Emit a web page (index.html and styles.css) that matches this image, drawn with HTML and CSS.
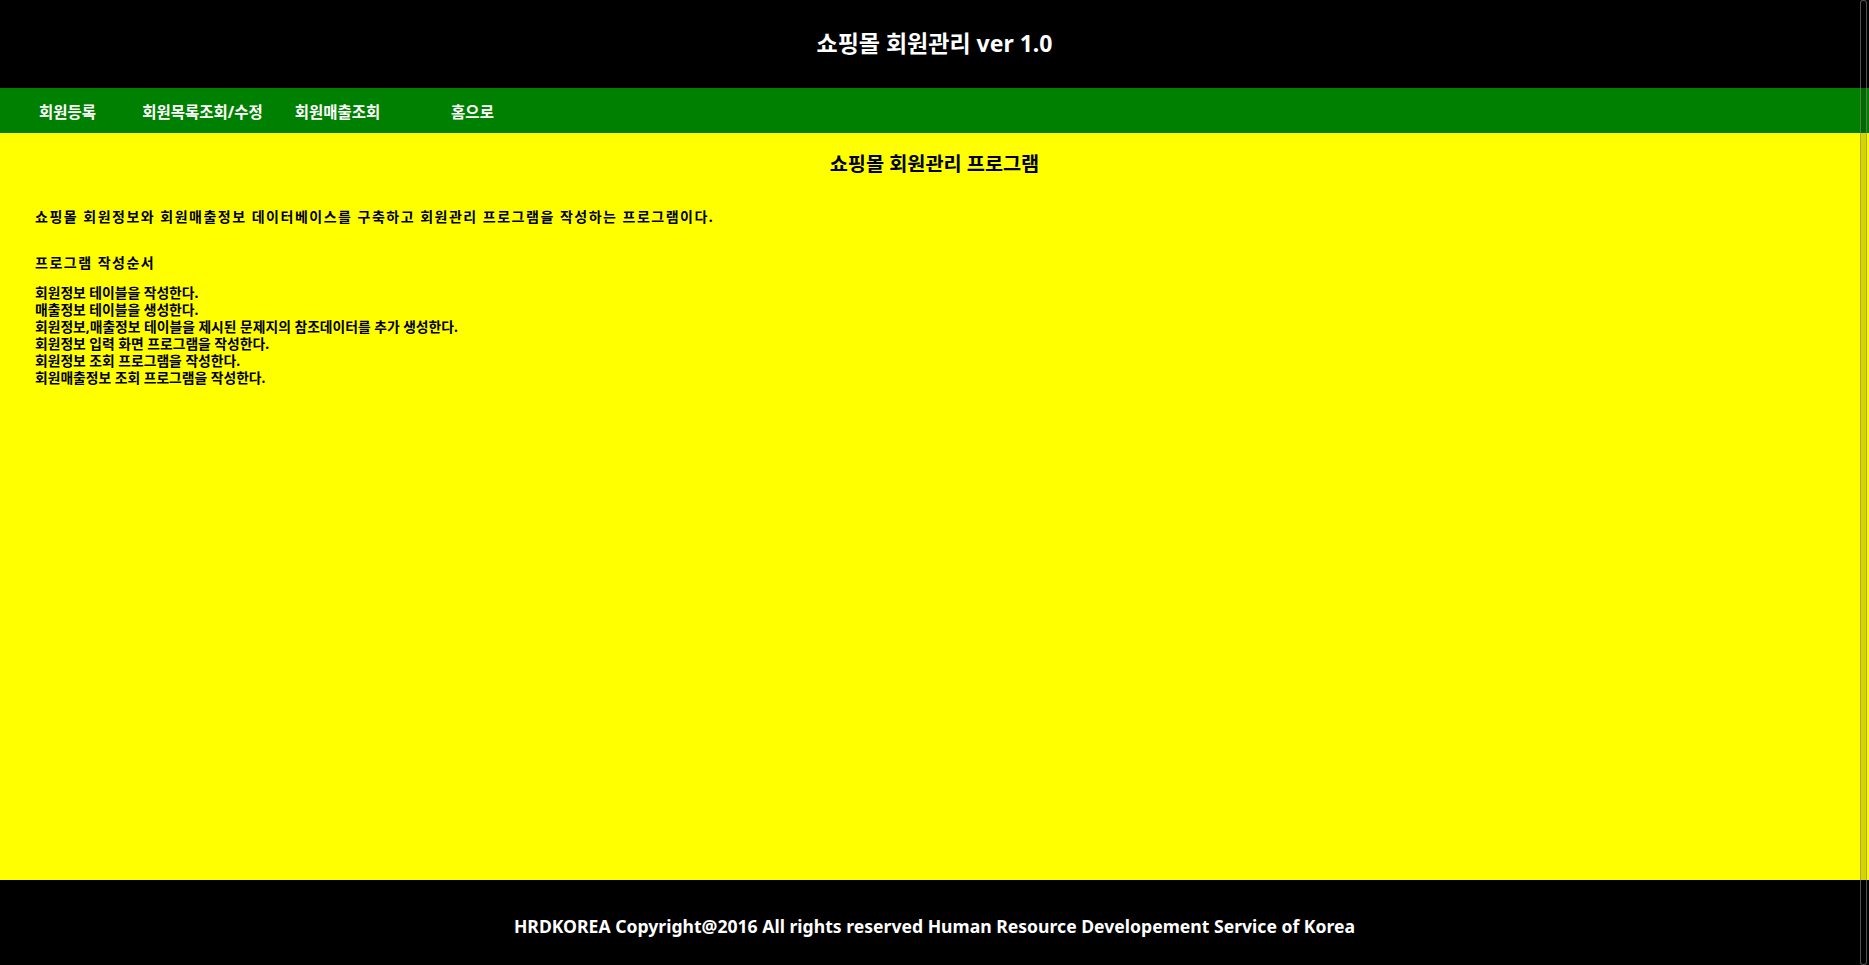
FILE: index.html
```html
<!DOCTYPE html>
<html lang="ko">
<head>
<meta charset="utf-8">
<title>쇼핑몰 회원관리</title>
<link rel="stylesheet" href="styles.css">
</head>
<body>
<div class="page">
  <header class="top">
    <h1 class="top-title">쇼핑몰 회원관리 ver 1.0</h1>
  </header>
  <nav class="menu">
    <a class="menu-item" href="#">회원등록</a>
    <a class="menu-item" href="#">회원목록조회/수정</a>
    <a class="menu-item" href="#">회원매출조회</a>
    <a class="menu-item" href="#">홈으로</a>
  </nav>
  <main class="content">
    <h2 class="content-title">쇼핑몰 회원관리 프로그램</h2>
    <p class="intro">쇼핑몰 회원정보와 회원매출정보 데이터베이스를 구축하고 회원관리 프로그램을 작성하는 프로그램이다.</p>
    <h3 class="steps-title">프로그램 작성순서</h3>
    <ul class="steps">
      <li>회원정보 테이블을 작성한다.</li>
      <li>매출정보 테이블을 생성한다.</li>
      <li>회원정보,매출정보 테이블을 제시된 문제지의 참조데이터를 추가 생성한다.</li>
      <li>회원정보 입력 화면 프로그램을 작성한다.</li>
      <li>회원정보 조회 프로그램을 작성한다.</li>
      <li>회원매출정보 조회 프로그램을 작성한다.</li>
    </ul>
  </main>
  <footer class="bottom">
    <p class="bottom-text">HRDKOREA Copyright@2016 All rights reserved Human Resource Developement Service of Korea</p>
  </footer>
</div>
<div class="scrollbar"></div>
</body>
</html>
```
FILE: styles.css
```css
html, body {
  margin: 0;
  padding: 0;
  height: 100%;
}
body {
  font-family: "Noto Sans", "Noto Sans CJK KR", sans-serif;
  overflow: hidden;
}
.page {
  display: flex;
  flex-direction: column;
  min-height: 100vh;
}
.top {
  background: #000;
  height: 88px;
  display: flex;
  align-items: center;
  justify-content: center;
}
.top-title {
  margin: 0 0 2px;
  color: #fff;
  font-size: 23px;
  font-weight: 700;
  line-height: 30px;
}
.menu {
  background: #008000;
  height: 45px;
  display: flex;
  align-items: center;
}
.menu-item {
  width: 135px;
  text-align: center;
  color: #fff;
  text-decoration: none;
  font-size: 15.5px;
  font-weight: 700;
  line-height: 20px;
  padding-top: 2px;
}
.content {
  flex: 1;
  background: #ffff00;
  padding: 0 35px;
  color: #000;
}
.content-title {
  margin: 16px 0 0;
  text-align: center;
  font-size: 19.7px;
  font-weight: 700;
  line-height: 30px;
}
.intro {
  margin: 28px 0 0;
  font-size: 14px;
  font-weight: 700;
  letter-spacing: 1.5px;
  line-height: 20px;
}
.steps-title {
  margin: 26px 0 0;
  font-size: 14px;
  font-weight: 700;
  letter-spacing: 1.5px;
  line-height: 20px;
}
.steps {
  list-style: none;
  margin: 11px 0 0;
  padding: 0;
  font-size: 13.8px;
  font-weight: 700;
  line-height: 17px;
}
.bottom {
  background: #000;
  height: 85px;
  display: flex;
  align-items: center;
  justify-content: center;
}
.bottom-text {
  margin: 7px 0 0;
  color: #fff;
  font-size: 17.6px;
  font-weight: 700;
}
.scrollbar {
  position: fixed;
  top: 0;
  bottom: 0;
  right: 2px;
  width: 5px;
  border-radius: 3px;
  border: 1px solid rgba(140, 140, 140, 0.6);
  background: rgba(0, 0, 0, 0.17);
}
```
